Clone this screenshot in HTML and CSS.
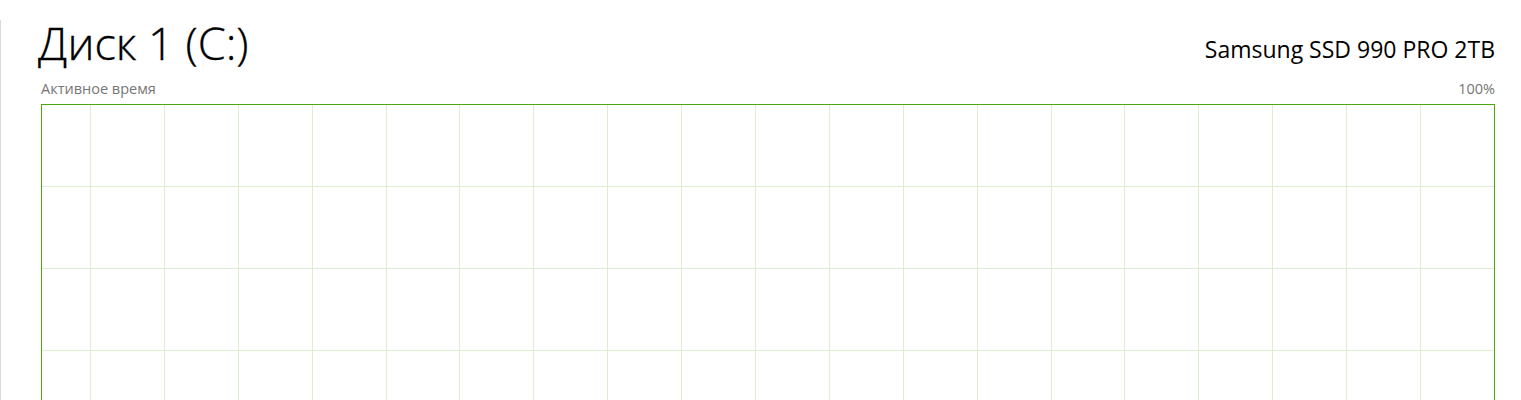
FILE: index.html
```html
<!DOCTYPE html>
<html lang="ru">
<head>
<meta charset="utf-8">
<link rel="stylesheet" href="styles.css">
</head>
<body>
<div class="panel">
  <div class="header">
    <h1 class="title">Диск 1 (C:)</h1>
    <div class="model">Samsung SSD 990 PRO 2TB</div>
  </div>
  <div class="labels">
    <span>Активное время</span>
    <span>100%</span>
  </div>
  <div class="graph">
    <svg class="grid" xmlns="http://www.w3.org/2000/svg" shape-rendering="crispEdges">
      <g fill="#dcedd0">
        <rect x="48" y="0" width="1" height="100%"/>
        <rect x="122" y="0" width="1" height="100%"/>
        <rect x="196" y="0" width="1" height="100%"/>
        <rect x="270" y="0" width="1" height="100%"/>
        <rect x="344" y="0" width="1" height="100%"/>
        <rect x="417" y="0" width="1" height="100%"/>
        <rect x="491" y="0" width="1" height="100%"/>
        <rect x="565" y="0" width="1" height="100%"/>
        <rect x="639" y="0" width="1" height="100%"/>
        <rect x="713" y="0" width="1" height="100%"/>
        <rect x="787" y="0" width="1" height="100%"/>
        <rect x="861" y="0" width="1" height="100%"/>
        <rect x="935" y="0" width="1" height="100%"/>
        <rect x="1009" y="0" width="1" height="100%"/>
        <rect x="1082" y="0" width="1" height="100%"/>
        <rect x="1156" y="0" width="1" height="100%"/>
        <rect x="1230" y="0" width="1" height="100%"/>
        <rect x="1304" y="0" width="1" height="100%"/>
        <rect x="1378" y="0" width="1" height="100%"/>
        <rect x="0" y="81" width="100%" height="1"/>
        <rect x="0" y="163" width="100%" height="1"/>
        <rect x="0" y="245" width="100%" height="1"/>
        <rect x="0" y="327" width="100%" height="1"/>
        <rect x="0" y="409" width="100%" height="1"/>
      </g>
    </svg>
  </div>
</div>
</body>
</html>
```

FILE: styles.css
```css
html, body {
  margin: 0;
  padding: 0;
  background: #ffffff;
  overflow: hidden;
}

body {
  font-family: "Open Sans", "Noto Sans", sans-serif;
  color: #000000;
}

.panel {
  margin-top: 20px;
  height: 600px;
  border-left: 1px solid #d9d9d9;
  padding: 0 26px 0 40px;
}

.header {
  display: flex;
  justify-content: space-between;
  align-items: flex-start;
  height: 62px;
}

.title {
  margin: 0 0 0 -3px;
  padding-top: 0;
  font-weight: 300;
  font-size: 45px;
  line-height: 1;
  -webkit-text-stroke: 0.35px #000;
}

.model {
  padding-top: 18px;
  font-size: 23px;
  font-weight: 400;
  line-height: 1;
}

.labels {
  display: flex;
  justify-content: space-between;
  align-items: flex-start;
  height: 22px;
  font-size: 14.5px;
  line-height: 1;
  color: #767676;
}

.graph {
  border: 1px solid #4da60c;
  height: 500px;
}

.grid {
  display: block;
  width: 100%;
  height: 100%;
}
```
